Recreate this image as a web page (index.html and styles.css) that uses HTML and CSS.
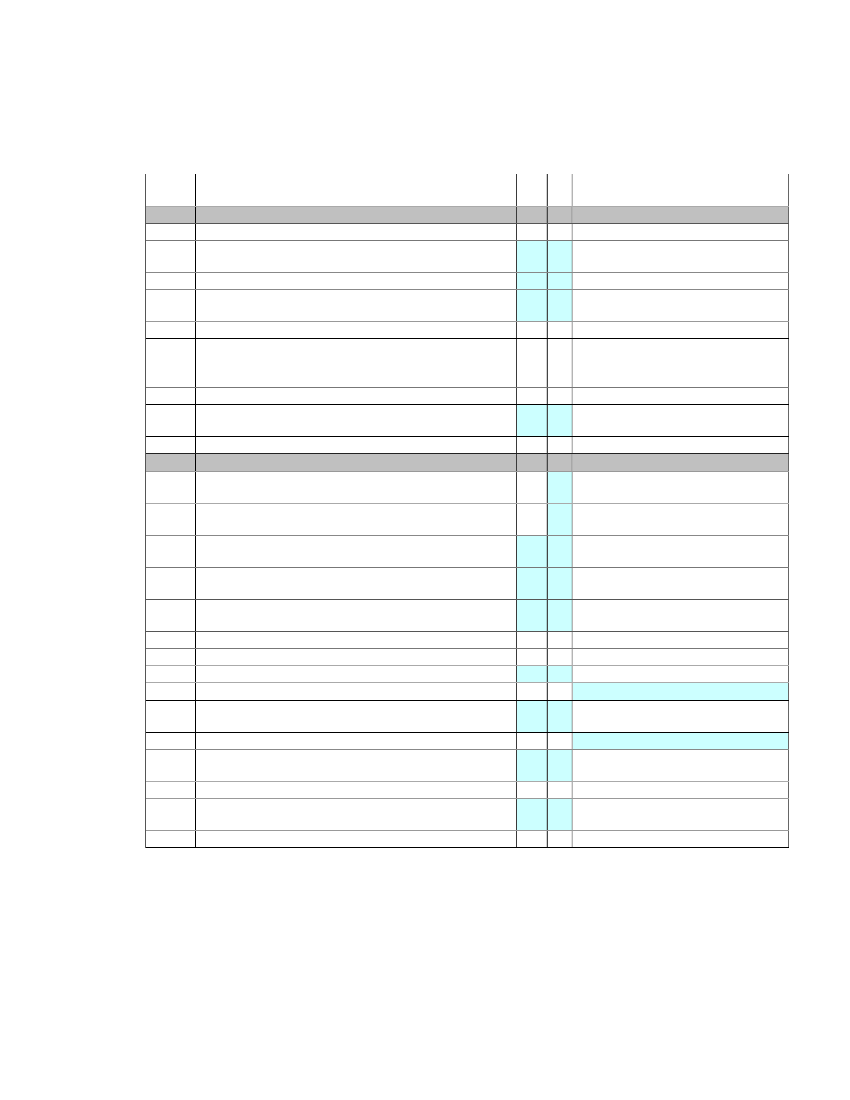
FILE: index.html
```html
<!DOCTYPE html>
<html>
<head>
<meta charset="utf-8">
<link rel="stylesheet" href="styles.css">
</head>
<body>
<div class="page">
  <div class="sheet">
    <div class="row h33 ba"><div></div><div></div><div></div><div></div><div></div></div>
    <div class="row h17 b5 grey"><div></div><div></div><div></div><div></div><div></div></div>
    <div class="row h17 b7"><div></div><div></div><div></div><div></div><div></div></div>
    <div class="row h32 b8"><div></div><div></div><div class="c"></div><div class="c"></div><div></div></div>
    <div class="row h17 b8"><div></div><div></div><div class="c"></div><div class="c"></div><div></div></div>
    <div class="row h32 b9"><div></div><div></div><div class="c"></div><div class="c"></div><div></div></div>
    <div class="row h17 b0"><div></div><div></div><div></div><div></div><div></div></div>
    <div class="row h49 b7"><div></div><div></div><div></div><div></div><div></div></div>
    <div class="row h17 b0"><div></div><div></div><div></div><div></div><div></div></div>
    <div class="row h32 b0"><div></div><div></div><div class="c"></div><div class="c"></div><div></div></div>
    <div class="row h17 b2"><div></div><div></div><div></div><div></div><div></div></div>
    <div class="row h18 b9 grey"><div></div><div></div><div></div><div></div><div></div></div>
    <div class="row h32 ba"><div></div><div></div><div></div><div class="c"></div><div></div></div>
    <div class="row h32 b8"><div></div><div></div><div></div><div class="c"></div><div></div></div>
    <div class="row h32 b7"><div></div><div></div><div class="c"></div><div class="c"></div><div></div></div>
    <div class="row h32 b5"><div></div><div></div><div class="c"></div><div class="c"></div><div></div></div>
    <div class="row h32 b5"><div></div><div></div><div class="c"></div><div class="c"></div><div></div></div>
    <div class="row h17 b7"><div></div><div></div><div></div><div></div><div></div></div>
    <div class="row h17 ba"><div></div><div></div><div></div><div></div><div></div></div>
    <div class="row h17 ba"><div></div><div></div><div class="c"></div><div class="c"></div><div></div></div>
    <div class="row h18 b0"><div></div><div></div><div></div><div></div><div class="c"></div></div>
    <div class="row h32 b0"><div></div><div></div><div class="c"></div><div class="c"></div><div></div></div>
    <div class="row h17 b8"><div></div><div></div><div></div><div></div><div class="c"></div></div>
    <div class="row h32 ba"><div></div><div></div><div class="c"></div><div class="c"></div><div></div></div>
    <div class="row h17 b9"><div></div><div></div><div></div><div></div><div></div></div>
    <div class="row h32 b9"><div></div><div></div><div class="c"></div><div class="c"></div><div></div></div>
    <div class="row h17 b0"><div></div><div></div><div></div><div></div><div></div></div>
  </div>
</div>
</body>
</html>
```
FILE: styles.css
```css
html, body {
  margin: 0;
  padding: 0;
  background: #ffffff;
  font-family: "Liberation Sans", Arial, sans-serif;
}

.page {
  padding: 174px 0 0 145px;
}

.sheet {
  width: 644px;
  box-sizing: border-box;
  border-left: 1px solid #555555;
}

.row {
  display: grid;
  grid-template-columns: 50px 321px 31px 25px 216px;
  box-sizing: border-box;
  border-bottom: 1px solid #888888;
}

.row > div {
  box-sizing: border-box;
  border-right: 1px solid #444444;
}

.row > div:nth-child(1) { border-right-color: #000000; }
.row > div:nth-child(2) { border-right-color: #3a3a3a; }
.row > div:nth-child(3) {
  border-right-color: #444444;
  box-shadow: inset -1px 0 0 rgba(0, 0, 0, 0.18);
}
.row > div:nth-child(4) {
  border-right-color: #b4b4b4;
  box-shadow: inset -1px 0 0 rgba(0, 0, 0, 0.12);
}
.row > div:nth-child(5) { border-right-color: #666666; }

.grey { background: #c0c0c0; }
.c { background: #ccffff; }

.h17 { height: 17px; }
.h18 { height: 18px; }
.h32 { height: 32px; }
.h33 { height: 33px; }
.h49 { height: 49px; }

.b0 { border-bottom-color: #000000; }
.b2 { border-bottom-color: #222222; }
.b5 { border-bottom-color: #555555; }
.b7 { border-bottom-color: #777777; }
.b8 { border-bottom-color: #888888; }
.b9 { border-bottom-color: #999999; }
.ba { border-bottom-color: #aaaaaa; }
```
